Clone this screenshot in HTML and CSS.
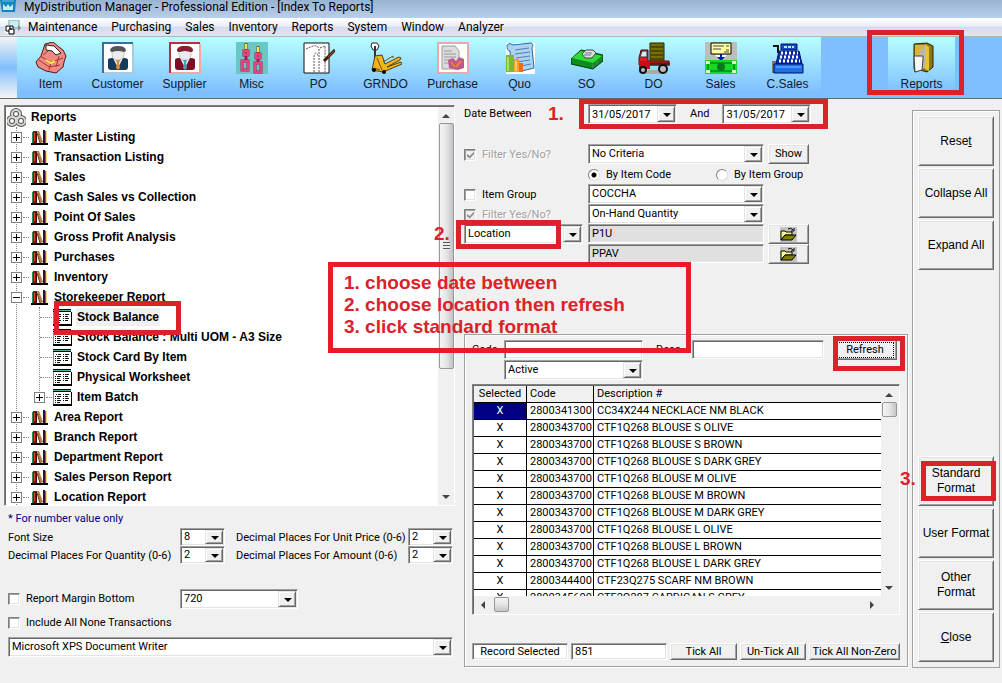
FILE: index.html
```
<!DOCTYPE html>
<html lang="en">
<head>
<meta charset="utf-8">
<title>MyDistribution Manager</title>
<link rel="stylesheet" href="styles.css">
</head>
<body>
<svg class="defs" aria-hidden="true">
  <symbol id="books" viewBox="0 0 17 15">
    <path d="M0 13h17v2H0z" fill="#000"/>
    <path d="M1 2h1v11H1z" fill="#2f8a5c"/><path d="M2 1h4v12H2z" fill="#8c1010"/><path d="M3 3h1v8H3z" fill="#e2451f"/><path d="M5 2h1v11H5z" fill="#3a0505"/>
    <path d="M6 1h2l4 11-2 1h-1z" fill="#b07f38"/><path d="M6 3l3 10" stroke="#5b3b10" fill="none"/>
    <path d="M12 0h2v13h-2z" fill="#2a1038"/><path d="M14 1h1v12h-1z" fill="#9a5a6a"/><path d="M15 1h1v12h-1z" fill="#ecd980"/>
  </symbol>
  <symbol id="sheet" viewBox="0 0 19 17">
    <path d="M0 0h19v17H0z" fill="#fff"/><path d="M0 0h18v1H0zM0 2h18v1H0zM0 15h19v2H0zM18 3h1v14h-1z" fill="#000"/><path d="M0 1h18v1H0z" fill="#5ab0a8"/><path d="M0 3h1v12H0z" fill="#888"/>
    <path d="M3 5h1v1H3zM2 7h1v1H2zM2 9h1v1H2zM2 11h1v1H2zM2 13h1v1H2zM5 5h3v1H5zM4 7h4v1H4zM4 9h3v1H4zM4 11h4v1H4zM4 13h3v1H4zM10 5h1v1h-1zM10 7h1v1h-1zM10 9h1v1h-1zM10 11h1v1h-1zM12 5h4v1h-4zM12 7h3v1h-3zM12 9h4v1h-4zM12 11h3v1h-3z" fill="#111"/>
  </symbol>
  <symbol id="folder" viewBox="0 0 17 15">
    <path d="M0 0h17v15H0z" fill="#c4c4c4"/>
    <path d="M1 4h4l1 1h6v3H5l-4 5z" fill="#ffff8a" stroke="#000"/><path d="M1 13l4-5h11l-4 5z" fill="#808000" stroke="#000"/>
    <path d="M8 2q3-2 5 1M14 1v3h-3" fill="none" stroke="#000"/>
  </symbol>
  <symbol id="person" viewBox="0 0 32 32">
    <path d="M1 1h30v30H1z" fill="#fff"/>
    <path d="M6 18q0-2 4-2h12q4 0 4 2v7q0 3-3 3H9q-3 0-3-3z" fill="currentColor"/>
    <path d="M11 16l5 10 5-10z" fill="#eef"/>
    <path d="M10 8h12v5q-1 5-6 5t-6-5z" fill="#ececee" stroke="#c4c4c8"/>
    <path d="M8 9q0-5 8-5t8 5l-2 1q-6-2-12 0z" fill="#555"/>
  </symbol>
</svg>

<div class="app">
  <header class="titlebar">
    <svg class="app-icon" viewBox="0 0 16 13"><path d="M0 0h16l-1 12H2z" fill="#1683bd"/><path d="M3 4l3 3 2-3 2 3 3-3v6H3z" fill="#bfeefa"/><path d="M2 1h12" stroke="#6cc7e8"/></svg>
    <h1>MyDistribution Manager - Professional Edition - [Index To Reports]</h1>
  </header>

  <nav class="menubar" aria-label="Main menu">
    <svg class="menu-icon" viewBox="0 0 16 15"><path d="M4 0h10v8H4z" fill="#c9eef0" stroke="#73a9b5"/><path d="M13 5l3 3-3 3z" fill="#888"/><path d="M0 5h8v8H0z" fill="#fff"/><path d="M1 6h4v3h4v5H4v-3H1zM4 11V9h3M5 6h3v2" fill="none" stroke="#000"/></svg>
    <button>Maintenance</button><button>Purchasing</button><button>Sales</button><button>Inventory</button><button>Reports</button><button>System</button><button>Window</button><button>Analyzer</button>
  </nav>

  <div class="toolbar" role="toolbar" aria-label="Shortcuts">
    <button class="tool"><svg viewBox="0 0 32 32"><path d="M10 2l8-2 6 5 4 3 3 6-2 6-1 5-7 6-10-2-8-4-2-5 5-6z" fill="#ef8a80" stroke="#5a1414"/><path d="M11 3l8 1 7 7-5 2-4-4-6-1z" fill="#fff" stroke="#222"/><path d="M5 14l11 6 12-4M4 18l10 7 11-2M16 20l-2 8M8 13l5-4M24 14l-3 11" fill="none" stroke="#a33434"/><path d="M11 18l5 3 4-2" fill="none" stroke="#ffe24a" stroke-width="2"/></svg><span>Item</span></button>
    <button class="tool"><svg class="navy" viewBox="0 0 32 32"><use href="#person"/><path d="M14 18h4l-1 3 1 5-2 2-2-2 1-5z" fill="#e08a2c"/><path d="M1 31V1h30" fill="none" stroke="#3c6f96" stroke-width="2"/><path d="M31 2v29H2" fill="none" stroke="#a9cbe2" stroke-width="2"/></svg><span>Customer</span></button>
    <button class="tool"><svg class="wine" viewBox="0 0 32 32"><use href="#person"/><path d="M8 9q0-5 8-5t8 5l-2 1q-6-2-12 0z" fill="#8c1c30"/><path d="M14 18h4l-1 3 1 5-2 2-2-2 1-5z" fill="#38a9b0"/><path d="M1 31V1h30" fill="none" stroke="#c32b3d" stroke-width="2"/><path d="M31 2v29H2" fill="none" stroke="#f5a5a8" stroke-width="2"/></svg><span>Supplier</span></button>
    <button class="tool"><svg viewBox="0 0 32 32"><path d="M0 0h32v32H0z" fill="#69c8c6"/><path d="M10 1v9M22 4v9" stroke="#8a5a10" stroke-width="3"/><path d="M10 2v5M22 5v5" stroke="#ffe04a" stroke-width="2"/><path d="M8 9h4v4H8zM20 12h4v4h-4zM6 19h6v9H6zM19 21h6v9h-6zM10 13v5M22 16v4" fill="none" stroke="#a01c50" stroke-width="3"/><path d="M8 9h4v4H8zM20 12h4v4h-4zM6 19h6v9H6zM19 21h6v9h-6z" fill="none" stroke="#f0407c" stroke-width="2"/></svg><span>Misc</span></button>
    <button class="tool"><svg viewBox="0 0 32 32"><path d="M1 1h25v30H1z" fill="#fff" stroke="#111"/><path d="M3 7l7-3q5-1 6 3v23M11 30V14q2-6 4 0M17 6l5-2v26" fill="none" stroke="#555" stroke-dasharray="2 1"/><path d="M32 8l-6 6-5 5" stroke="#3b1a0a" stroke-width="3"/><path d="M31 9l-6 6" stroke="#a45b30"/></svg><span>PO</span></button>
    <button class="tool"><svg viewBox="0 0 32 32"><path d="M2 1h5l2 3-2 4H3L1 4z" fill="#fff" stroke="#222"/><path d="M5 4v21" stroke="#333" stroke-width="2"/><path d="M5 14l7-1 3 9 14-7 2 1-1 2-13 7 14-5 1 2-19 8-11-2z" fill="#eeb51d" stroke="#5d3d00"/><path d="M13 20l10-6v2M7 16l5 12M4 26l6 2" stroke="#76500a" fill="none"/><circle cx="4" cy="28" r="2"/><circle cx="14" cy="30" r="2"/></svg><span>GRNDO</span></button>
    <button class="tool"><svg viewBox="0 0 32 32"><path d="M1 1h30v30H1z" fill="#fff" stroke="#f0a3b1" stroke-width="2"/><path d="M5 4h13l4 5v18H5z" fill="#ddd" stroke="#999"/><path d="M7 9h8M7 12h12M7 15h12M7 18h8M7 21h6" stroke="#999"/><path d="M11 18l5-2 3 3 3-4 5 2v9l-6 2-9-2z" fill="#c0578c"/><path d="M14 20l4 5M24 19l-5 6" stroke="#e18538" stroke-width="2"/></svg><span>Purchase</span></button>
    <button class="tool"><svg viewBox="0 0 32 32"><path d="M2 1h29v31H2z" fill="#fff"/><path d="M3 3q3-3 6 0l18-2q3 1 1 5l2 20-12 3-11-3-1-17q-3 0-3-6z" fill="#acd3f1" stroke="#2f6aa1"/><path d="M11 8l14-2M11 12l15-2M12 16l14-2M13 20l13-2M17 24l10-2" stroke="#4c82af"/><path d="M2 13h8v17H2z" fill="#77bc2e"/><path d="M10 17h5v13h-5z" fill="#f2a21d"/><path d="M15 21h4v9h-4z" fill="#ed6b20"/><path d="M4 15v14M12 19v10" stroke="#e8f6b8"/></svg><span>Quo</span></button>
    <button class="tool"><svg viewBox="0 0 32 32"><path d="M0 17l10-9 22 5v6l-10 8-22-5z" fill="#0d8b1c" stroke="#043d09"/><path d="M1 16l9-7 21 5-9 7z" fill="#2bdd35"/><path d="M11 12l4-4h7l3 3-4 5h-7z" fill="#ddd" stroke="#444"/><path d="M14 11h7M13 13h7M22 22v4M26 19v4" stroke="#777"/></svg><span>SO</span></button>
    <button class="tool"><svg viewBox="0 0 32 32"><path d="M10 28h18v4H8z" fill="#aaa"/><path d="M12 1h14v19H12z" fill="#777000" stroke="#252300"/><path d="M13 5h12M13 9h12M13 13h12M13 17h12" stroke="#252300"/><path d="M3 8h7v11h21v4H1v-7z" fill="#e31b20" stroke="#600"/><path d="M4 9h5v6H2z" fill="#cdeeff" stroke="#333"/><path d="M1 19h11v8H1z" fill="#c40d14"/><path d="M12 22h20" stroke="#502015" stroke-width="3"/><circle cx="5" cy="28" r="3" fill="#bbb" stroke="#111" stroke-width="2"/><circle cx="25" cy="27" r="4" fill="#bbb" stroke="#111" stroke-width="2"/></svg><span>DO</span></button>
    <button class="tool"><svg viewBox="0 0 32 32"><path d="M0 0h32v32H0z" fill="#bdbdbd"/><path d="M6 1h20v11H6z" fill="#ffffa0" stroke="#000"/><path d="M8 4h11M8 7h8M21 4h3M21 8h3M19 10h5" stroke="#444"/><path d="M10 13h12l-6 5z" fill="#fff"/><path d="M15 12h2v3h3l-4 4-4-4h3z" fill="#001aa8"/><path d="M0 18h32v14H0z" fill="#15d82a"/><path d="M3 21h26v8H3z" fill="none" stroke="#075e10"/><circle cx="16" cy="25" r="4" fill="#0a7820"/><path d="M1 19h4v3H1zM27 19h4v3h-4zM1 28h4v3H1zM27 28h4v3h-4z" fill="#dfffd0"/></svg><span>Sales</span></button>
    <button class="tool"><svg viewBox="0 0 32 32"><path d="M0 19h5v12H0z" fill="#777"/><path d="M9 2h16v6H9z" fill="#124bd0" stroke="#001060"/><path d="M1 4h5v6h20" fill="none" stroke="#111" stroke-width="2"/><path d="M7 9h20l3 13H4z" fill="#0930a8" stroke="#001060"/><path d="M9 11h17M8 15h19M7 19h21" stroke="#fff" stroke-width="3" stroke-dasharray="2 2"/><path d="M12 5h10" stroke="#bfe4ff" stroke-width="2" stroke-dasharray="3 1"/><path d="M2 22h29v9H2z" fill="#1e6fe8" stroke="#001060"/><path d="M4 25h25" stroke="#79c0ff"/></svg><span>C.Sales</span></button>
    <div class="tool-gap"></div>
    <button class="tool"><svg viewBox="0 0 32 32"><path d="M8 2l13-1 6 3v21l-6 5-7-2-5 2-1-4z" fill="#8e7613" stroke="#2c2300"/><path d="M9 3h10v23l-5 2-5 1z" fill="#b7b7ae"/><path d="M19 2l4 3v24l-4-2z" fill="#e2c62b"/><path d="M8 14h9v3l-1 11-7 2z" fill="#f6f6f6" stroke="#444"/><path d="M10 4v9h4V8l4-2V3z" fill="#d8b823"/></svg><span>Reports</span><i class="mark mark-reports"></i></button>
    <div class="tool-rest"></div>
  </div>

  <main class="workspace">
    <section class="left">
      <div class="treebox">
        <ul class="tree">
          <li class="row root"><svg class="knot" viewBox="0 0 19 19"><g fill="none" stroke="#555" stroke-width="4"><circle cx="9" cy="6" r="4"/><circle cx="5" cy="13" r="4"/><circle cx="14" cy="13" r="4"/></g><g fill="none" stroke="#d8d8d0" stroke-width="2"><circle cx="9" cy="6" r="4"/><circle cx="5" cy="13" r="4"/><circle cx="14" cy="13" r="4"/></g></svg><span>Reports</span></li>
          <li class="row"><button class="toggle" aria-label="Expand"></button><svg class="books"><use href="#books"/></svg><span>Master Listing</span></li>
          <li class="row"><button class="toggle" aria-label="Expand"></button><svg class="books"><use href="#books"/></svg><span>Transaction Listing</span></li>
          <li class="row"><button class="toggle" aria-label="Expand"></button><svg class="books"><use href="#books"/></svg><span>Sales</span></li>
          <li class="row"><button class="toggle" aria-label="Expand"></button><svg class="books"><use href="#books"/></svg><span>Cash Sales vs Collection</span></li>
          <li class="row"><button class="toggle" aria-label="Expand"></button><svg class="books"><use href="#books"/></svg><span>Point Of Sales</span></li>
          <li class="row"><button class="toggle" aria-label="Expand"></button><svg class="books"><use href="#books"/></svg><span>Gross Profit Analysis</span></li>
          <li class="row"><button class="toggle" aria-label="Expand"></button><svg class="books"><use href="#books"/></svg><span>Purchases</span></li>
          <li class="row"><button class="toggle" aria-label="Expand"></button><svg class="books"><use href="#books"/></svg><span>Inventory</span></li>
          <li>
            <div class="row"><button class="toggle open" aria-label="Collapse"></button><svg class="books"><use href="#books"/></svg><span>Storekeeper Report</span></div>
            <ul class="subtree">
              <li class="row leaf"><svg class="sheet"><use href="#sheet"/></svg><span class="current">Stock Balance</span><i class="mark mark-stock"></i></li>
              <li class="row leaf"><svg class="sheet"><use href="#sheet"/></svg><span>Stock Balance : Multi UOM - A3 Size</span></li>
              <li class="row leaf"><svg class="sheet"><use href="#sheet"/></svg><span>Stock Card By Item</span></li>
              <li class="row leaf"><svg class="sheet"><use href="#sheet"/></svg><span>Physical Worksheet</span></li>
              <li class="row"><button class="toggle" aria-label="Expand"></button><svg class="sheet"><use href="#sheet"/></svg><span>Item Batch</span></li>
            </ul>
          </li>
          <li class="row"><button class="toggle" aria-label="Expand"></button><svg class="books"><use href="#books"/></svg><span>Area Report</span></li>
          <li class="row"><button class="toggle" aria-label="Expand"></button><svg class="books"><use href="#books"/></svg><span>Branch Report</span></li>
          <li class="row"><button class="toggle" aria-label="Expand"></button><svg class="books"><use href="#books"/></svg><span>Department Report</span></li>
          <li class="row"><button class="toggle" aria-label="Expand"></button><svg class="books"><use href="#books"/></svg><span>Sales Person Report</span></li>
          <li class="row"><button class="toggle" aria-label="Expand"></button><svg class="books"><use href="#books"/></svg><span>Location Report</span></li>
        </ul>
        <div class="vscroll"><i class="up"></i><i class="thumb tall"></i><i class="down"></i></div>
      </div>

      <p class="note">* For number value only</p>
      <div class="decimals">
        <label for="fs">Font Size</label><span class="combo"><select id="fs"><option>8</option></select></span>
        <label for="up" class="inner">Decimal Places For Unit Price (0-6)</label><span class="combo"><select id="up"><option>2</option></select></span>
        <label for="dq">Decimal Places For Quantity (0-6)</label><span class="combo"><select id="dq"><option>2</option></select></span>
        <label for="da" class="inner">Decimal Places For Amount (0-6)</label><span class="combo"><select id="da"><option>2</option></select></span>
      </div>
      <div class="margin-row">
        <label class="check"><input type="checkbox">Report Margin Bottom</label>
        <span class="combo margin-size"><select aria-label="Margin bottom"><option>720</option></select></span>
      </div>
      <label class="check none-row"><input type="checkbox">Include All None Transactions</label>
      <span class="combo printer"><select aria-label="Printer"><option>Microsoft XPS Document Writer</option></select></span>
    </section>

    <section class="center">
      <div class="dates">
        <label for="from">Date Between</label><b class="step">1.</b>
        <div class="range">
          <span class="combo date"><input id="from" type="text" value="31/05/2017"></span>
          <label for="to">And</label>
          <span class="combo date"><input id="to" type="text" value="31/05/2017"></span>
          <i class="mark mark-dates"></i>
        </div>
      </div>
      <div class="filters">
        <label class="check off"><input type="checkbox" checked disabled>Filter Yes/No?</label>
        <span class="combo"><select aria-label="Criteria"><option>No Criteria</option></select></span>
        <button class="btn">Show</button>
        <div class="radios"><label><input type="radio" name="by" checked>By Item Code</label><label><input type="radio" name="by">By Item Group</label></div>
        <label class="check"><input type="checkbox">Item Group</label>
        <span class="combo"><select aria-label="Item group"><option>COCCHA</option></select></span>
        <label class="check off start"><input type="checkbox" checked disabled>Filter Yes/No?</label>
        <span class="combo"><select aria-label="Quantity type"><option>On-Hand Quantity</option></select></span>
        <div class="location start"><span class="combo"><select aria-label="Filter by"><option>Location</option></select></span><i class="mark mark-location"></i><b class="step step-two">2.</b></div>
        <input class="field grey" aria-label="Location from" value="P1U">
        <button class="btn" aria-label="Browse"><svg class="folder"><use href="#folder"/></svg></button>
        <input class="field grey second" aria-label="Location to" value="PPAV">
        <button class="btn" aria-label="Browse"><svg class="folder"><use href="#folder"/></svg></button>
      </div>

      <div class="group">
        <div class="search">
          <label for="code">Code</label><input class="field" id="code">
          <label for="desc" class="desc-label">Desc</label><input class="field" id="desc">
          <div class="refresh"><button class="btn"><span>Refresh</span></button><i class="mark mark-refresh"></i></div>
          <span class="combo status"><select aria-label="Status"><option>Active</option></select></span>
        </div>
        <div class="gridbox">
          <div class="gridview">
            <table>
              <thead><tr><th class="c-sel">Selected</th><th class="c-code">Code</th><th>Description #</th></tr></thead>
              <tbody>
                <tr><td class="picked">X</td><td>2800341300</td><td>CC34X244 NECKLACE NM BLACK</td></tr>
                <tr><td>X</td><td>2800343700</td><td>CTF1Q268 BLOUSE S OLIVE</td></tr>
                <tr><td>X</td><td>2800343700</td><td>CTF1Q268 BLOUSE S BROWN</td></tr>
                <tr><td>X</td><td>2800343700</td><td>CTF1Q268 BLOUSE S DARK GREY</td></tr>
                <tr><td>X</td><td>2800343700</td><td>CTF1Q268 BLOUSE M OLIVE</td></tr>
                <tr><td>X</td><td>2800343700</td><td>CTF1Q268 BLOUSE M BROWN</td></tr>
                <tr><td>X</td><td>2800343700</td><td>CTF1Q268 BLOUSE M DARK GREY</td></tr>
                <tr><td>X</td><td>2800343700</td><td>CTF1Q268 BLOUSE L OLIVE</td></tr>
                <tr><td>X</td><td>2800343700</td><td>CTF1Q268 BLOUSE L BROWN</td></tr>
                <tr><td>X</td><td>2800343700</td><td>CTF1Q268 BLOUSE L DARK GREY</td></tr>
                <tr><td>X</td><td>2800344400</td><td>CTF23Q275 SCARF NM BROWN</td></tr>
                <tr><td>X</td><td>2800345600</td><td>CTF2Q287 CARDIGAN S GREY</td></tr>
              </tbody>
            </table>
          </div>
          <div class="vscroll"><i class="up"></i><i class="thumb"></i><i class="down"></i></div>
          <div class="hscroll"><i class="prev"></i><i class="thumb"></i><i class="next"></i></div>
        </div>
        <div class="totals">
          <label for="rec" class="field rec">Record Selected</label><input class="field" id="rec" value="851">
          <button class="btn">Tick All</button><button class="btn">Un-Tick All</button><button class="btn">Tick All Non-Zero</button>
        </div>
      </div>

      <ol class="steps"><li>1. choose date between</li><li>2. choose location then refresh</li><li>3. click standard format</li></ol>
    </section>

    <aside class="side">
      <button class="btn"><span>Rese<u>t</u></span></button>
      <button class="btn">Collapse All</button>
      <button class="btn">Expand All</button>
      <div class="lower">
        <div class="standard"><button class="btn"><span>Standard<br>Format</span></button><i class="mark mark-standard"></i><b class="step step-three">3.</b></div>
        <button class="btn">User Format</button>
        <button class="btn"><span>Other<br>Format</span></button>
        <button class="btn"><span><u>C</u>lose</span></button>
      </div>
    </aside>
  </main>
</div>
</body>
</html>
```
FILE: styles.css
```
:root {
  --face: #f0f0f0;
  --red: #dc2229;
  --ui: Roboto, "Liberation Sans", sans-serif;
  --arial: "Liberation Sans", Arial, sans-serif;
}
* { box-sizing: border-box; }
body { margin: 0; background: var(--face); color: #000; font: 11px/14px var(--ui); }
button, input, select { font: inherit; color: inherit; margin: 0; padding: 0; border: 0; border-radius: 0; background: none; }
ul, ol { list-style: none; margin: 0; padding: 0; }
svg { display: block; flex: none; }
.defs { position: absolute; width: 0; height: 0; }
.app { min-height: 100vh; display: flex; flex-direction: column; }

/* title and menu */
.titlebar { height: 18px; display: flex; align-items: flex-start; gap: 8px; background: linear-gradient(#98b3d2, #b9cfe8); }
.titlebar h1 { margin: 0; font: 12px/14px var(--ui); white-space: nowrap; }
.app-icon { width: 16px; height: 13px; }
.menubar { height: 19px; display: flex; align-items: center; gap: 14px; padding-left: 5px; background: linear-gradient(#fff 0, #eceef7 45%, #d6dbed 50%, #e0e4f2 100%); border-bottom: 1px solid #b5b5b5; font: 12px/18px var(--ui); }
.menu-icon { width: 16px; height: 15px; margin-right: -7px; }

/* toolbar */
.toolbar { display: flex; height: 62px; padding-left: 17px; border-bottom: 1px solid #696969; background: linear-gradient(#f4f4f4, #80bfff 50%, #f4f4f4); font: 12px/18px var(--arial); color: #101830; }
.tool { position: relative; width: 67px; flex: none; display: flex; flex-direction: column; align-items: center; gap: 1px; padding-top: 5px; background: linear-gradient(#b8ffff, #80bfff 90%); }
.tool svg { width: 32px; height: 32px; }
.navy { color: #17395c; }
.wine { color: #7a1024; }
.tool-gap { width: 67px; background: #80bfff; }
.tool-rest { flex: 1; background: #80bfff; }

/* red annotations */
.mark { position: absolute; border: 5px solid var(--red); pointer-events: none; z-index: 3; }
.mark-reports { left: -21px; top: -7px; width: 97px; height: 65px; }
.mark-dates { left: -9px; top: -5px; right: -17px; height: 30px; }
.mark-stock { left: 25px; top: -6px; width: 127px; height: 34px; }
.mark-location { left: -8px; top: -4px; width: 105px; height: 29px; }
.mark-refresh { left: 0; top: -3px; width: 72px; height: 35px; }
.mark-standard { left: 3px; top: 5px; right: -2px; height: 40px; }
.step { font: bold 19px/20px var(--arial); color: var(--red); }
.step-two { position: absolute; left: -30px; top: 0; }
.step-three { position: absolute; left: -18px; top: 13px; }
.steps { position: absolute; left: -132px; top: 163px; width: 363px; padding: 5px 11px 10px; border: 5px solid #e81c24; color: var(--red); font: bold 19px/22px var(--arial); white-space: nowrap; z-index: 4; }

/* shared controls */
.combo, .field { height: 20px; background: #fff; border: 1px solid; border-color: #a0a0a0 #fff #fff #a0a0a0; box-shadow: inset 1px 1px #696969, inset -1px -1px #e3e3e3; }
.combo { position: relative; display: block; min-width: 0; }
.combo select, .combo input { display: block; width: 100%; height: 100%; padding: 0 18px 0 3px; appearance: none; outline: 0; }
.combo::before { content: ""; position: absolute; right: 1px; top: 1px; bottom: 1px; width: 16px; background: var(--face); border: 1px solid; border-color: #e3e3e3 #696969 #696969 #e3e3e3; box-shadow: inset 1px 1px #fff, inset -1px -1px #a0a0a0; pointer-events: none; }
.combo::after { content: ""; position: absolute; right: 5px; top: 8px; border: 4px solid transparent; border-top-color: #000; border-bottom: 0; pointer-events: none; }
.field { min-width: 0; width: 100%; padding: 0 3px; }
.grey { background: #e0e0e0; }
.btn { display: flex; align-items: center; justify-content: center; text-align: center; background: var(--face); border: 1px solid; border-color: #fff #696969 #696969 #fff; box-shadow: inset 1px 1px #e3e3e3, inset -1px -1px #a0a0a0; }
.check { display: flex; align-items: center; gap: 6px; white-space: nowrap; }
.check input { position: relative; flex: none; width: 12px; height: 12px; appearance: none; background: #fff; border: 1px solid; border-color: #808080 #fff #fff #808080; box-shadow: inset 1px 1px #a0a0a0, inset -1px -1px #e3e3e3; }
.off { color: #a0a0a0; text-shadow: 1px 1px #fff; }
.off input { background: var(--face); }
.off input::after { content: ""; position: absolute; left: 2px; top: 2px; width: 7px; height: 7px; background: #909090; clip-path: polygon(0 35%, 40% 65%, 100% 0, 100% 35%, 40% 100%, 0 70%); }

/* scroll bars */
.vscroll { position: relative; width: 16px; display: flex; flex-direction: column; align-items: center; background: #f0f0f0; }
.vscroll i, .hscroll i { display: block; }
.up, .down, .prev, .next { border: 4px solid transparent; }
.up { border-bottom-color: #444; border-top: 0; margin: 7px 0 5px; }
.down { border-top-color: #444; border-bottom: 0; margin: auto 0 6px; }
.prev { border-right-color: #444; border-left: 0; margin: 0 9px 0 7px; }
.next { border-left-color: #444; border-right: 0; margin: 0 24px 0 auto; }
.thumb { width: 15px; height: 15px; border: 1px solid #979797; border-radius: 2px; background: linear-gradient(90deg, #f5f5f5, #e5e5e5 50%, #c6c6ca); }
.tall { height: 246px; background: repeating-linear-gradient(#555 0 1px, #eee 1px 3px) center / 7px 8px no-repeat, linear-gradient(90deg, #f5f5f5, #e5e5e5 50%, #c0c0c6); }

/* panes */
.workspace { flex: 1; display: grid; grid-template-columns: minmax(0, 452fr) minmax(0, 448fr) 88px; gap: 4px; padding: 0 2px 15px 4px; }
.left { padding-top: 6px; }

/* report tree */
.treebox { display: flex; height: 401px; margin-right: 1px; background: #fff; border: 1px solid; border-color: #808080 #fff #fff #808080; box-shadow: inset 1px 1px #696969; overflow: hidden; padding: 1px 0 0 1px; }
.tree { position: relative; flex: 1; font: bold 12px/16px var(--arial); }
.tree::before, .subtree::before { content: ""; position: absolute; left: 10px; top: 20px; bottom: 0; border-left: 1px dotted #808080; }
.subtree { position: relative; padding-left: 23px; }
.subtree::before { left: 33px; top: 0; bottom: 10px; }
.row { position: relative; display: flex; align-items: center; height: 20px; padding-left: 5px; white-space: nowrap; }
.root { padding-left: 1px; gap: 5px; }
.knot { width: 19px; height: 19px; }
.toggle { position: relative; z-index: 1; width: 11px; height: 11px; margin-right: 9px; border: 1px solid #808080; background: linear-gradient(#000, #000) center / 7px 1px no-repeat, linear-gradient(#000, #000) center / 1px 7px no-repeat, #fff; }
.toggle.open { background: linear-gradient(#000, #000) center / 7px 1px no-repeat, #fff; }
.toggle::after { content: ""; position: absolute; left: 11px; top: 4px; width: 6px; border-top: 1px dotted #808080; }
.books { width: 17px; height: 15px; margin-right: 6px; }
.sheet { width: 19px; height: 17px; margin-right: 4px; }
.subtree .toggle { margin-right: 8px; }
.leaf { padding-left: 24px; }
.leaf::before { content: ""; position: absolute; left: 11px; top: 10px; width: 12px; border-top: 1px dotted #808080; }
.subtree span { padding: 1px; }
.current { background: var(--face); }

/* options under the tree */
.note { margin: 6px 4px 2px; color: #00007c; }
.decimals { display: grid; grid-template-columns: 172px 45px minmax(0, 1fr) 45px; align-items: center; padding: 0 3px 0 4px; white-space: nowrap; }
.decimals label { height: 18px; line-height: 20px; }
.decimals .combo { height: 18px; }
.decimals .combo::after { top: 7px; }
.decimals .inner { padding-left: 11px; }
.margin-row { display: flex; align-items: center; padding-left: 4px; margin-top: 25px; }
.margin-row .check { width: 172px; }
.margin-size { width: 118px; }
.none-row { margin: 7px 4px; }
.printer { margin: 6px 3px 0 4px; }

/* filters */
.center { position: relative; padding: 5px 0 0 4px; }
.dates { display: flex; align-items: center; height: 20px; }
.dates > label { width: 84px; }
.dates .step { width: 40px; }
.range { position: relative; display: flex; align-items: center; gap: 13px; }
.date { width: 89px; }
.filters { display: grid; grid-template-columns: 120px minmax(0, 176fr) 41px minmax(0, 95fr); column-gap: 4px; grid-auto-rows: 20px; margin-top: 20px; }
.filters .check, .radios { padding-top: 1px; }
.filters .field { height: 19px; }
.filters .btn { height: 20px; grid-column: 3; }
.filters .combo { grid-column: 2; }
.start { grid-column: 1; }
.second { grid-column: 2; }
.radios { grid-column: 2 / -1; display: flex; align-items: center; }
.radios label { display: flex; align-items: center; gap: 6px; width: 128px; white-space: nowrap; }
.radios input { width: 12px; height: 12px; appearance: none; border: 1px solid; border-color: #808080 #ddd #ddd #808080; border-radius: 50%; background: #fff; }
.radios input:checked { background: radial-gradient(circle, #000 0 2px, #fff 3px); }
.location { position: relative; }
.location .combo { width: 119px; }
.folder { width: 17px; height: 15px; }

/* item list */
.group { margin-top: 70px; padding: 4px 7px 6px; border: 1px solid #a0a0a0; box-shadow: inset 1px 1px #fff, 1px 1px #fff; }
.search { display: grid; grid-template-columns: 32px minmax(0, 139fr) 49px minmax(0, 132fr) 9px 67px; align-items: center; }
.search .field { height: 19px; }
.desc-label { padding-left: 13px; }
.status { grid-column: 2; }
.refresh { grid-column: 6; position: relative; }
.refresh .btn { width: 64px; height: 21px; padding: 2px; border-color: #696969; }
.refresh span { flex: 1; border: 1px dotted #000; }
.gridbox { display: grid; grid-template: minmax(0, 1fr) 17px / minmax(0, 1fr) 17px; height: 231px; margin-top: 4px; border: 1px solid; border-color: #808080 #fff #fff #808080; box-shadow: inset 1px 1px #696969; padding: 1px; }
.gridview { overflow: hidden; background: #fff; }
table { width: 100%; table-layout: fixed; border-collapse: separate; border-spacing: 0; }
th, td { height: 17px; padding: 0 3px; border: solid #000; border-width: 0 0 1px 1px; font-weight: normal; text-align: left; line-height: 16px; white-space: nowrap; overflow: hidden; }
th { background: var(--face); }
th:first-child, td:first-child { border-left: 0; text-align: center; }
.c-sel { width: 52px; }
.c-code { width: 67px; }
.picked { background: #000080; color: #fff; }
.hscroll { grid-column: 1 / -1; display: flex; align-items: center; }
.hscroll .thumb { background: linear-gradient(#f5f5f5, #e5e5e5 50%, #c6c6ca); }
.totals { display: grid; grid-template-columns: minmax(0, 96fr) minmax(0, 96fr) minmax(0, 67fr) minmax(0, 66fr) 91px; gap: 3px; margin-top: 28px; }
.totals .field, .totals .btn { height: 17px; white-space: nowrap; }
.rec { text-align: center; line-height: 16px; }

/* side buttons */
.side { display: flex; flex-direction: column; gap: 2px; margin-top: 11px; padding: 5px; border: 1px solid #a0a0a0; box-shadow: inset 1px 1px #fff; font: 12px/15px var(--arial); }
.side .btn { width: 100%; height: 50px; }
.lower { display: flex; flex-direction: column; gap: 2px; margin-top: auto; }
.standard { position: relative; }
```
